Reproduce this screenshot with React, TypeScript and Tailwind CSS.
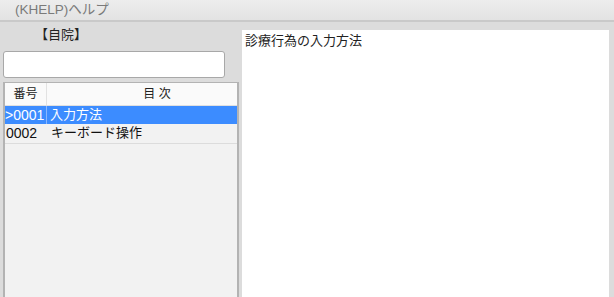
import React from "react";

const font = { fontFamily: '"Liberation Sans", "Noto Sans CJK JP", sans-serif' };

export default function App() {
  return (
    <div className="w-[614px] h-[297px] overflow-hidden bg-[#dcdcdc] flex flex-col" style={font}>
      <div className="h-[22px] shrink-0 bg-gradient-to-b from-[#ededed] to-[#e3e3e3] border-b-2 border-[#c9c9c9] flex items-center pl-[15px] text-[13.5px] text-[#7a7a7a]">
        (KHELP)ヘルプ
      </div>
      <div className="flex flex-1 min-h-0">
        <div className="w-[242px] shrink-0 flex flex-col pl-[3px]">
          <div className="h-[16px] mt-[5px] pl-[32px] text-[13px] text-[#222] leading-[16px]">【自院】</div>
          <div className="mt-[8px] w-[222px] h-[27px] bg-white border border-[#a8a8a8] rounded-[3px]" />
          <div className="mt-[4px] w-[236px] flex-1 border-x-2 border-t border-[#b3b3b3] bg-[#f2f2f2] flex flex-col text-[13px]">
            <div className="h-[23px] bg-[#fafafa] flex text-[12px] text-[#222] border-b border-[#e0e0e0]">
              <div className="w-[42px] border-r border-[#e2e2e2] flex items-center justify-center">番号</div>
              <div className="flex-1 flex items-center justify-center pl-[30px]">目 次</div>
            </div>
            <div className="h-[18px] bg-[#3c8cff] flex text-white items-center">
              <div className="w-[42px] border-r border-[#8ab8ff] h-full flex items-center text-[14px] whitespace-nowrap overflow-hidden">&gt;0001</div>
              <div className="pl-[3px]">入力方法</div>
            </div>
            <div className="h-[20px] flex items-start text-[#111] border-b border-[#dcdcdc]">
              <div className="w-[42px] pl-[1px] h-[18px] flex items-center text-[14px]">0002</div>
              <div className="pl-[4px] h-[18px] flex items-center">キーボード操作</div>
            </div>
          </div>
        </div>
        <div className="flex-1 flex flex-col pt-[8px] pr-[5px]">
          <div className="flex-1 bg-white pl-[3px] pt-[2px] text-[13px] text-[#222] leading-[17px]">
            診療行為の入力方法
          </div>
        </div>
      </div>
    </div>
  );
}
